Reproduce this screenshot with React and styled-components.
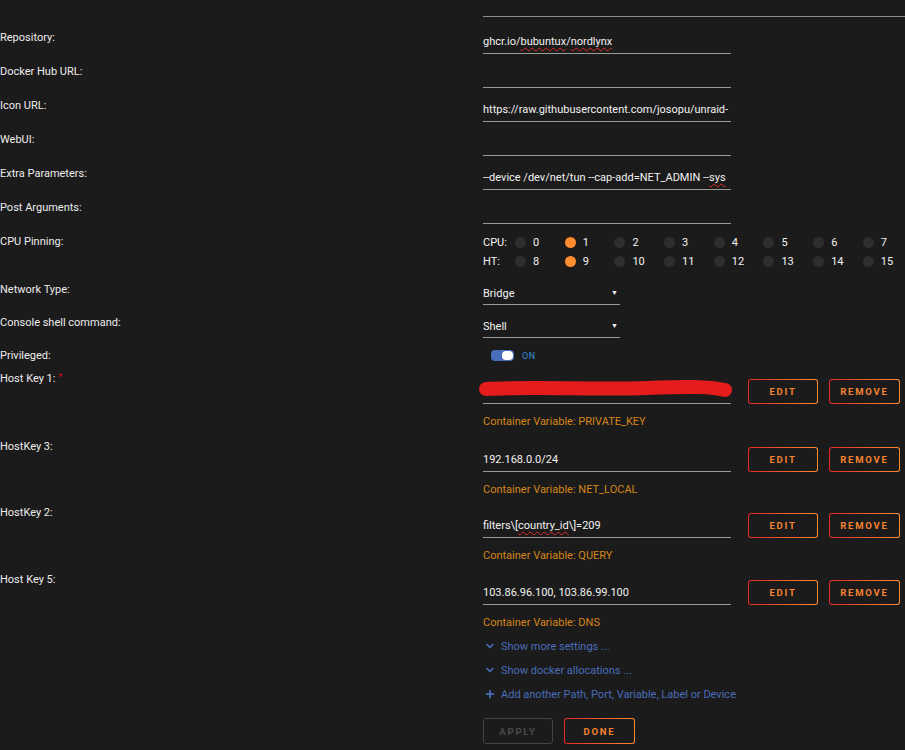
import React from 'react';
import styled, { createGlobalStyle } from 'styled-components';
import { ChevronDown, Plus } from 'lucide-react';

const GlobalStyle = createGlobalStyle`
  body {
    margin: 0;
    background: #1c1b1b;
    font-family: Roboto, "Liberation Sans", sans-serif;
    color: #f2f2f2;
  }
`;

const Page = styled.div`
  width: 905px;
  height: 750px;
  overflow: hidden;
  background: #1c1b1b;
`;

const TopRule = styled.div`
  margin-left: 483px;
  height: 16px;
  border-bottom: 1px solid #8f8f8f;
  margin-bottom: 6px;
`;

const Row = styled.div`
  display: grid;
  grid-template-columns: 483px 1fr;
  height: ${p => p.$h || 34}px;
`;

const Label = styled.div`
  padding-top: 8px;
  font-size: 11px;
  line-height: 14px;
  color: #ececec;
  white-space: nowrap;
`;

const Required = styled.span`
  color: #d11;
  font-size: 9px;
  vertical-align: top;
  margin-left: 3px;
  line-height: 10px;
`;

const Field = styled.div`
  position: relative;
  box-sizing: border-box;
  width: ${p => p.$w || 248}px;
  height: 22px;
  margin-top: ${p => (p.$mt === undefined ? 9 : p.$mt)}px;
  border-bottom: 1px solid #9a9a9a;
  font-size: 11px;
  line-height: 20px;
  color: #f2f2f2;
  white-space: nowrap;
  overflow: ${p => (p.$visible ? 'visible' : 'hidden')};
`;

const Select = styled(Field)`
  display: flex;
  justify-content: space-between;
  align-items: center;
  line-height: 19px;
  padding-right: 2px;
`;

const Arrow = styled.span`
  font-size: 7px;
  color: #f2f2f2;
`;

const Typo = styled.span`
  text-decoration: underline wavy #e02a2a;
  text-decoration-thickness: 1px;
  text-underline-offset: 2px;
`;

const CpuGrid = styled.div`
  padding-top: 6px;
  display: grid;
  grid-template-columns: 32px repeat(8, 49.7px);
  grid-auto-rows: 19px;
  font-size: 11px;
  align-items: center;
`;

const CpuCell = styled.div`
  display: flex;
  align-items: center;
  gap: 7px;
`;

const Dot = styled.span`
  width: 11px;
  height: 11px;
  border-radius: 50%;
  background: ${p => (p.$on ? '#ff8c2f' : '#2e2e2e')};
  flex: none;
`;

const Toggle = styled.div`
  display: flex;
  align-items: center;
  gap: 8px;
  padding: 6px 0 0 8px;
`;

const Track = styled.span`
  width: 23px;
  height: 11px;
  border-radius: 4px;
  background: #486dba;
  display: flex;
  justify-content: flex-end;
  padding: 1px;
  box-sizing: border-box;
`;

const Knob = styled.span`
  width: 11px;
  height: 9px;
  border-radius: 4px;
  background: #fff;
`;

const OnText = styled.span`
  color: #2f77b8;
  font-size: 9px;
  font-weight: 500;
  letter-spacing: 0.5px;
`;

const VarBlock = styled.div`
  display: flex;
  flex-direction: column;
`;

const VarLine = styled.div`
  display: flex;
  align-items: flex-end;
  margin-top: 15px;
`;

const Button = styled.button`
  box-sizing: border-box;
  width: ${p => p.$w || 70}px;
  height: ${p => p.$h || 25}px;
  margin-left: ${p => p.$ml || 0}px;
  border: 1px solid transparent;
  border-radius: 3px;
  background:
    linear-gradient(#1c1b1b, #1c1b1b) padding-box,
    linear-gradient(90deg, #e22828, #ff8c2f) border-box;
  color: #f58330;
  font-family: Roboto, "Liberation Sans", sans-serif;
  font-size: 9.5px;
  font-weight: 700;
  letter-spacing: 1.8px;
  padding: 0;
  cursor: pointer;
`;

const GhostButton = styled(Button)`
  background: transparent;
  border-color: #444;
  color: #4a4a4a;
`;

const VarName = styled.div`
  margin-top: 11px;
  font-size: 11px;
  line-height: 14px;
  color: #d4861a;
`;

const Scribble = styled.svg`
  position: absolute;
  left: -6px;
  top: -2px;
  overflow: visible;
`;

const Links = styled.div`
  margin-top: 2px;
`;

const LinkLine = styled.div`
  display: flex;
  align-items: center;
  gap: 5px;
  height: 24px;
  padding-left: 1px;
  font-size: 11px;
  color: #486dba;
`;

const Actions = styled.div`
  display: flex;
  gap: 11px;
  margin-top: 12px;
`;

const textRows = [
  { label: 'Repository:', value: <>ghcr.io/<Typo>bubuntux</Typo>/<Typo>nordlynx</Typo></> },
  { label: 'Docker Hub URL:', value: '' },
  { label: 'Icon URL:', value: 'https://raw.githubusercontent.com/josopu/unraid-' },
  { label: 'WebUI:', value: '' },
  { label: 'Extra Parameters:', value: <>--device /dev/net/tun --cap-add=NET_ADMIN --<Typo>sys</Typo></> },
  { label: 'Post Arguments:', value: '' },
];

const hostVars = [
  { label: 'Host Key 1:', required: true, value: '', name: 'PRIVATE_KEY', h: 68, hidden: true },
  { label: 'HostKey 3:', value: '192.168.0.0/24', name: 'NET_LOCAL', h: 66 },
  { label: 'HostKey 2:', value: <>filters\[<Typo>country_id</Typo>\]=209</>, name: 'QUERY', h: 67 },
  { label: 'Host Key 5:', value: '103.86.96.100, 103.86.99.100', name: 'DNS', h: 67 },
];

const cpus = [0, 1, 2, 3, 4, 5, 6, 7];

function CpuPinning() {
  return (
    <CpuGrid>
      <span>CPU:</span>
      {cpus.map(n => (
        <CpuCell key={n}><Dot $on={n === 1} />{n}</CpuCell>
      ))}
      <span>HT:</span>
      {cpus.map(n => (
        <CpuCell key={n + 8}><Dot $on={n === 1} />{n + 8}</CpuCell>
      ))}
    </CpuGrid>
  );
}

export default function App() {
  return (
    <Page>
      <GlobalStyle />
      <TopRule />
      {textRows.map(r => (
        <Row key={r.label}>
          <Label>{r.label}</Label>
          <div><Field>{r.value}</Field></div>
        </Row>
      ))}

      <Row $h={48}>
        <Label>CPU Pinning:</Label>
        <CpuPinning />
      </Row>

      <Row $h={33}>
        <Label>Network Type:</Label>
        <div><Select $w={137} $mt={8}>Bridge<Arrow>▼</Arrow></Select></div>
      </Row>
      <Row $h={33}>
        <Label>Console shell command:</Label>
        <div><Select $w={137} $mt={8}>Shell<Arrow>▼</Arrow></Select></div>
      </Row>

      <Row $h={23}>
        <Label>Privileged:</Label>
        <Toggle><Track><Knob /></Track><OnText>ON</OnText></Toggle>
      </Row>

      {hostVars.map(v => (
        <Row key={v.label} $h={v.h}>
          <Label>
            {v.label}
            {v.required && <Required>*</Required>}
          </Label>
          <VarBlock>
            <VarLine>
              <Field $mt={0} $visible={v.hidden}>
                {v.value}
                {v.hidden && (
                  <Scribble width="260" height="20" viewBox="0 0 260 20">
                    <path
                      d="M9 9 C 60 6, 120 10, 170 8 S 235 7, 248 10"
                      stroke="#e41c1c"
                      strokeWidth="14"
                      strokeLinecap="round"
                      fill="none"
                    />
                  </Scribble>
                )}
              </Field>
              <Button $ml={17}>EDIT</Button>
              <Button $ml={11} $w={71}>REMOVE</Button>
            </VarLine>
            <VarName>Container Variable: {v.name}</VarName>
          </VarBlock>
        </Row>
      ))}

      <Row $h={118}>
        <Label />
        <div>
          <Links>
            <LinkLine><ChevronDown size={12} strokeWidth={3.5} />Show more settings ...</LinkLine>
            <LinkLine><ChevronDown size={12} strokeWidth={3.5} />Show docker allocations ...</LinkLine>
            <LinkLine><Plus size={12} strokeWidth={3.5} />Add another Path, Port, Variable, Label or Device</LinkLine>
          </Links>
          <Actions>
            <GhostButton $h={26} disabled>APPLY</GhostButton>
            <Button $h={26} $w={71}>DONE</Button>
          </Actions>
        </div>
      </Row>
    </Page>
  );
}
